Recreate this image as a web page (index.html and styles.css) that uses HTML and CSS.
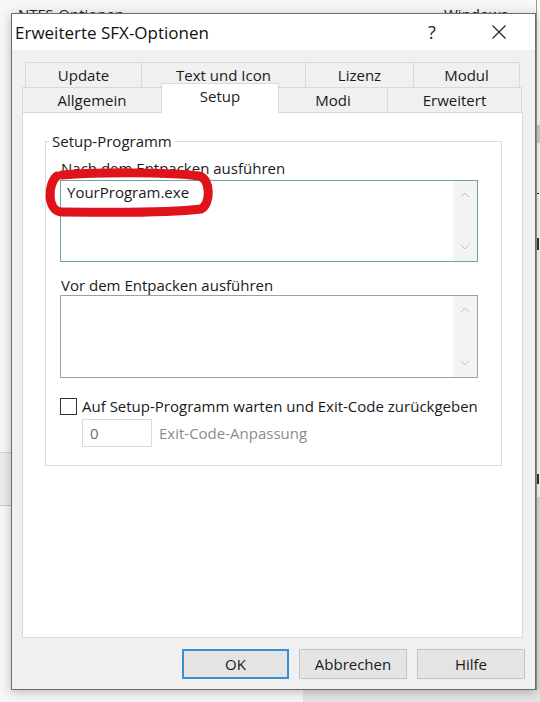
FILE: index.html
```html
<!DOCTYPE html>
<html lang="de">
<head>
    <meta charset="UTF-8">
    <title>Erweiterte SFX-Optionen</title>
    <link rel="stylesheet" href="styles.css">
</head>
<body>
    <div class="desk">
        <!-- windows behind the dialog -->
        <div class="behind-top">
            <span class="behind-title">NTFS-Optionen</span>
            <span class="behind-title win">Windows-Einstellungen</span>
        </div>
        <div class="behind-left"></div>
        <div class="behind-right">
            <div class="br-band"></div>
            <div class="br-mark m1"></div>
            <div class="br-mark m2"></div>
            <div class="br-mark m3"></div>
            <div class="br-low"></div>
        </div>
        <div class="behind-bottom"></div>

        <div class="dialog">
            <div class="titlebar">
                <span class="title">Erweiterte SFX-Optionen</span>
                <span class="help">?</span>
                <span class="close">
                    <svg width="14" height="14" viewBox="0 0 14 14"><path d="M0.5 0.5 L13.5 13.5 M13.5 0.5 L0.5 13.5" stroke="#222" stroke-width="1.2" fill="none"/></svg>
                </span>
            </div>
            <div class="client">
                <div class="tabs">
                    <div class="tabrow back">
                        <div class="tab" style="width:116px">Update</div>
                        <div class="tab" style="width:164px">Text und Icon</div>
                        <div class="tab" style="width:108px">Lizenz</div>
                        <div class="tab last" style="width:107px">Modul</div>
                    </div>
                    <div class="tabrow front">
                        <div class="tab" style="width:139px">Allgemein</div>
                        <div class="tab active" style="width:118px">Setup</div>
                        <div class="tab" style="width:109px">Modi</div>
                        <div class="tab last" style="width:135px">Erweitert</div>
                    </div>
                </div>
                <div class="panel">
                    <fieldset class="group">
                        <legend>Setup-Programm</legend>
                        <div class="label first">Nach dem Entpacken ausführen</div>
                        <div class="memo focus">
                            <div class="memo-text">YourProgram.exe</div>
                            <div class="vscroll">
                                <svg width="10" height="6" viewBox="0 0 10 6"><path d="M1 5 L5 1 L9 5" stroke="#c4c4c4" fill="none"/></svg>
                                <svg width="10" height="6" viewBox="0 0 10 6"><path d="M1 1 L5 5 L9 1" stroke="#c4c4c4" fill="none"/></svg>
                            </div>
                        </div>
                        <div class="label second">Vor dem Entpacken ausführen</div>
                        <div class="memo tall">
                            <div class="memo-text"></div>
                            <div class="vscroll">
                                <svg width="10" height="6" viewBox="0 0 10 6"><path d="M1 5 L5 1 L9 5" stroke="#c4c4c4" fill="none"/></svg>
                                <svg width="10" height="6" viewBox="0 0 10 6"><path d="M1 1 L5 5 L9 1" stroke="#c4c4c4" fill="none"/></svg>
                            </div>
                        </div>
                        <div class="check">
                            <span class="box"></span>
                            <span>Auf Setup-Programm warten und Exit-Code zurückgeben</span>
                        </div>
                        <div class="exitrow">
                            <span class="num">0</span>
                            <span class="muted">Exit-Code-Anpassung</span>
                        </div>
                    </fieldset>
                </div>
                <div class="buttons">
                    <div class="btn default">OK</div>
                    <div class="btn">Abbrechen</div>
                    <div class="btn">Hilfe</div>
                </div>
            </div>
        </div>

        <!-- red marker drawn over the screenshot -->
        <svg class="mark" width="540" height="702" viewBox="0 0 540 702">
            <path d="M62 175 C100 172 168 172 199 176 C211 178 211 205 201 209 C160 214 100 212 62 212 C47 212 47 184 57 176"
                  stroke="#e0131b" stroke-width="9" fill="none" stroke-linecap="round" stroke-linejoin="round"/>
        </svg>
    </div>
</body>
</html>
```

FILE: styles.css
```css
html, body {
    margin: 0;
    padding: 0;
}
body {
    font-family: "Open Sans", "Noto Sans", sans-serif;
    font-size: 15px;
    color: #1a1a1a;
    background-color: #f7f7f7;
}
.desk {
    position: relative;
    width: 540px;
    height: 702px;
    overflow: hidden;
    padding-top: 13px;
    padding-left: 11px;
    box-sizing: border-box;
}

/* background windows */
.behind-top {
    position: absolute;
    left: 0;
    top: 0;
    width: 540px;
    height: 13px;
    overflow: hidden;
}
.behind-title {
    position: absolute;
    left: 18px;
    top: 4px;
    line-height: 20px;
    color: #222;
}
.behind-title.win {
    left: 444px;
}
.behind-left {
    position: absolute;
    left: 0;
    top: 452px;
    width: 11px;
    height: 52px;
    background-color: #ececec;
    border-top: 1px solid #d2d2d2;
    border-bottom: 1px solid #c8c8c8;
}
.behind-right {
    position: absolute;
    left: 536px;
    top: 0;
    width: 4px;
    height: 702px;
    background-color: #fafafa;
    border-left: 1px solid #9a9a9a;
    box-sizing: border-box;
}
.br-band {
    position: absolute;
    left: 0;
    top: 125px;
    width: 4px;
    height: 18px;
    background-color: #cfcfcf;
}
.br-mark {
    position: absolute;
    left: 0;
    width: 2px;
    background-color: #333;
}
.br-mark.m1 { top: 193px; height: 1px; }
.br-mark.m2 { top: 238px; height: 12px; }
.br-mark.m3 { top: 474px; height: 10px; }
.br-low {
    position: absolute;
    left: 0;
    top: 497px;
    width: 4px;
    height: 205px;
    background-color: #dcdcdc;
}
.behind-bottom {
    position: absolute;
    left: 303px;
    top: 690px;
    width: 237px;
    height: 12px;
    background-color: #e4e4e4;
}

/* dialog */
.dialog {
    position: relative;
    z-index: 2;
    width: 525px;
    height: 677px;
    border: 1px solid #6c6c6c;
    box-sizing: border-box;
    background-color: #f0f0f0;
    box-shadow: 0 2px 10px rgba(0,0,0,0.25);
    display: flex;
    flex-direction: column;
}
.titlebar {
    height: 36px;
    background-color: #fff;
    display: flex;
    align-items: center;
    padding-left: 3px;
}
.title {
    font-size: 17px;
    flex: 1;
    color: #111;
}
.help {
    font-size: 18px;
    width: 14px;
    text-align: center;
    margin-right: 53px;
    color: #222;
}
.close {
    width: 14px;
    height: 14px;
    margin-right: 29px;
    display: flex;
}
.client {
    flex: 1;
    padding: 12px 12px 10px 10px;
    display: flex;
    flex-direction: column;
}

/* tabs */
.tabrow {
    display: flex;
    height: 25px;
}
.tabrow.back {
    padding-left: 3px;
}
.tab {
    box-sizing: border-box;
    border-top: 1px solid #d9d9d9;
    border-left: 1px solid #d9d9d9;
    text-align: center;
    line-height: 24px;
    background-color: #f0f0f0;
}
.tab.last {
    border-right: 1px solid #d9d9d9;
}
.tab.active {
    position: relative;
    z-index: 1;
    background-color: #fff;
    height: 30px;
    margin-top: -4px;
    line-height: 24px;
    border-right: 1px solid #d9d9d9;
    margin-right: -1px;
}

.panel {
    height: 526px;
    background-color: #fff;
    border: 1px solid #d9d9d9;
    box-sizing: border-box;
    padding: 18px 0 0 22px;
}

.group {
    margin: 0;
    padding: 0 0 18px 14px;
    width: 457px;
    box-sizing: border-box;
    border: 1px solid #dcdcdc;
}
.group legend {
    margin-left: -11px;
    padding: 0 3px;
    line-height: 20px;
}
.label {
    line-height: 20px;
    padding-left: 1px;
}
.label.first {
    margin-top: 7px;
}
.label.second {
    margin-top: 13px;
}
.memo {
    margin-top: 2px;
    width: 418px;
    height: 82px;
    box-sizing: border-box;
    border: 1px solid #a0a0a0;
    display: flex;
}
.memo.focus {
    border-color: #6aa6a8;
}
.memo.tall {
    margin-top: 0;
    height: 83px;
}
.memo-text {
    flex: 1;
    padding: 1px 6px;
    line-height: 20px;
}
.vscroll {
    width: 24px;
    background-color: #f3f3f3;
    display: flex;
    flex-direction: column;
    justify-content: space-between;
    align-items: center;
    padding: 11px 0 11px;
}
.vscroll svg {
    display: block;
}
.check {
    margin-top: 18px;
    display: flex;
    align-items: center;
    gap: 5px;
    line-height: 20px;
}
.box {
    width: 17px;
    height: 17px;
    box-sizing: border-box;
    border: 1px solid #333;
    background-color: #fff;
}
.exitrow {
    margin-top: 3px;
    margin-left: 22px;
    display: flex;
    align-items: center;
    gap: 7px;
}
.num {
    width: 70px;
    height: 28px;
    box-sizing: border-box;
    border: 1px solid #dadada;
    color: #6d6d6d;
    padding-left: 7px;
    line-height: 26px;
}
.muted {
    color: #8c8c8c;
}

/* buttons */
.buttons {
    margin-top: 11px;
    margin-right: -2px;
    display: flex;
    justify-content: flex-end;
    gap: 10px;
}
.btn {
    width: 108px;
    height: 30px;
    box-sizing: border-box;
    border: 1px solid #c4c4c4;
    background-color: #e4e4e4;
    text-align: center;
    line-height: 28px;
}
.btn.default {
    width: 107px;
    border: 2px solid #3b8fcf;
    line-height: 26px;
}

.mark {
    position: absolute;
    left: 0;
    top: 0;
    z-index: 3;
    pointer-events: none;
}
```
